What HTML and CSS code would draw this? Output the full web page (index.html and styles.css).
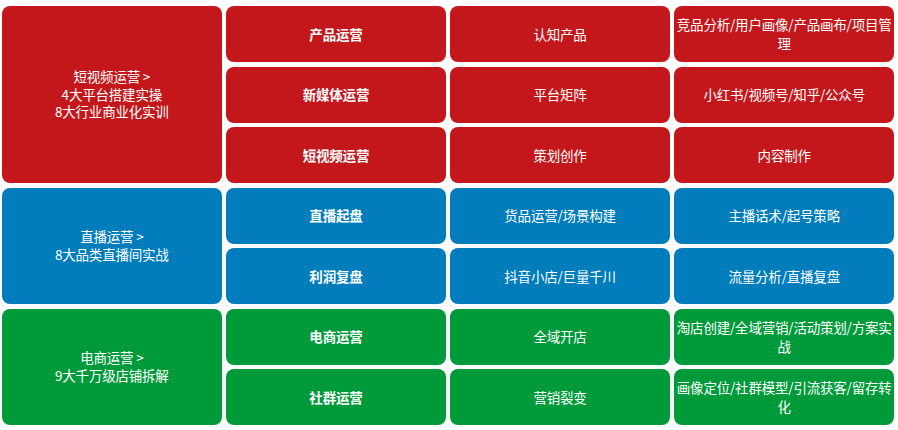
FILE: index.html
```html
<!DOCTYPE html>
<html lang="zh-CN">
<head>
    <meta charset="UTF-8">
    <title>运营课程体系</title>
    <link rel="stylesheet" href="styles.css">
</head>
<body>
    <div class="grid">
        <div class="cell cat red span3">短视频运营 &gt;<br>4大平台搭建实操<br>8大行业商业化实训</div>
        <div class="cell red title">产品运营</div>
        <div class="cell red">认知产品</div>
        <div class="cell red">竞品分析/用户画像/产品画布/项目管理</div>
        <div class="cell red title">新媒体运营</div>
        <div class="cell red">平台矩阵</div>
        <div class="cell red">小红书/视频号/知乎/公众号</div>
        <div class="cell red title">短视频运营</div>
        <div class="cell red">策划创作</div>
        <div class="cell red">内容制作</div>

        <div class="cell cat blue span2">直播运营 &gt;<br>8大品类直播间实战</div>
        <div class="cell blue title">直播起盘</div>
        <div class="cell blue">货品运营/场景构建</div>
        <div class="cell blue">主播话术/起号策略</div>
        <div class="cell blue title">利润复盘</div>
        <div class="cell blue">抖音小店/巨量千川</div>
        <div class="cell blue">流量分析/直播复盘</div>

        <div class="cell cat green span2">电商运营 &gt;<br>9大千万级店铺拆解</div>
        <div class="cell green title">电商运营</div>
        <div class="cell green">全域开店</div>
        <div class="cell green">淘店创建/全域营销/活动策划/方案实战</div>
        <div class="cell green title">社群运营</div>
        <div class="cell green">营销裂变</div>
        <div class="cell green">画像定位/社群模型/引流获客/留存转化</div>
    </div>
</body>
</html>
```

FILE: styles.css
```css
body {
    margin: 0;
    padding: 6px 4px 0 2px;
    background-color: #fff;
    font-family: "Noto Sans CJK SC", "Microsoft YaHei", sans-serif;
    font-size: 13.5px;
}
.grid {
    display: grid;
    grid-template-columns: repeat(4, 1fr);
    grid-auto-rows: 56px;
    gap: 4.5px;
    width: 892px;
}
.cell {
    display: flex;
    align-items: center;
    justify-content: center;
    text-align: center;
    color: #fff;
    border-radius: 8px;
    line-height: 19px;
    letter-spacing: -0.2px;
}
.cat {
    grid-column: 1;
    line-height: 17.5px;
}
.span3 {
    grid-row: span 3;
}
.span2 {
    grid-row: span 2;
}
.title {
    font-weight: bold;
}
.red {
    background-color: #C4171C;
}
.blue {
    background-color: #017DBB;
}
.green {
    background-color: #009A3A;
}
```
